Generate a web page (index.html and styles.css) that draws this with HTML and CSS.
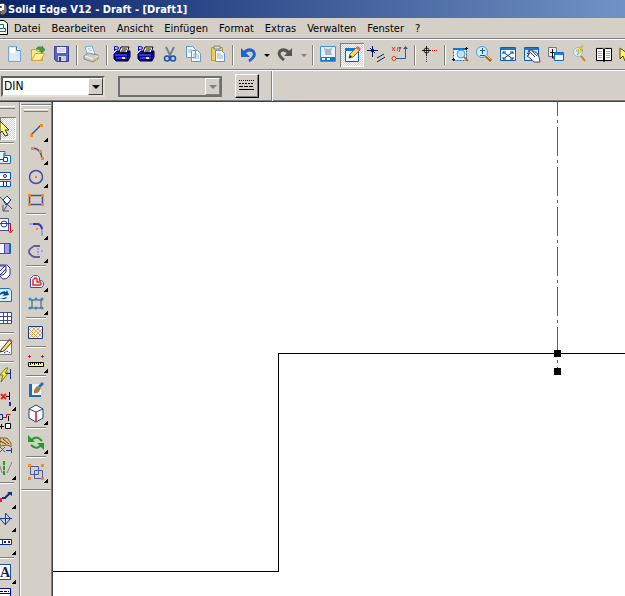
FILE: index.html
```
<!DOCTYPE html>
<html lang="de">
    <head>
        <title>Solid Edge V12 - Draft - [Draft1]</title>
        <meta charset="utf8"/>
        <link rel="stylesheet" href="styles.css">
    </head>
    <body>
        <header class="title">
            <svg class="title-icon" width="8" height="18"><path d="M0 3h4l3 3v6l-3 3H0z" fill="#777" stroke="#222"/><path d="M0 5h3v4H1v2" fill="none" stroke="#fff" stroke-width="2"/></svg>
            <h1>Solid Edge V12 - Draft - [Draft1]</h1>
        </header>
        <nav class="menu">
            <svg class="menu-icon" width="8" height="20"><path d="M-1 2.500h5l3.500 3v11H-1z" fill="#fff" stroke="#000"/><path d="M0 6.500h3.500v4h2v3H0M0 10.500h3" fill="none" stroke="#175"/></svg>
            <button>Datei</button>
            <button>Bearbeiten</button>
            <button>Ansicht</button>
            <button>Einfügen</button>
            <button>Format</button>
            <button>Extras</button>
            <button>Verwalten</button>
            <button>Fenster</button>
            <button>?</button>
        </nav>
        <div class="toolbar">
            <button class="tool" aria-label="Neu"><svg viewBox="0 0 24 24"><path d="M6.500 3.500h8l4 4v11h-12z" fill="#dcebfb" stroke="#75a5dc"/><path d="M14.500 3.500v4h4" fill="#fff" stroke="#4779bd"/><path d="M8 5h5v5H8z" fill="#fff"/></svg></button>
            <button class="tool" aria-label="Öffnen"><svg viewBox="0 0 24 24"><path d="M5.500 17.500v-11h4l2 2h5v9z" fill="#ffe58a" stroke="#d3a32c"/><path d="M5.500 17.500l4-7h9l-4 7z" fill="#fff09a" stroke="#d3a32c"/><path d="M10 6q3-4 6-1V3l3 4-4 3V8q-2-2-5-2" fill="#35a53a" stroke="#187525" stroke-width=".5"/></svg></button>
            <button class="tool" aria-label="Speichern"><svg viewBox="0 0 24 24"><path d="M4.500 3.500h14v15h-12l-2-2z" fill="#5961c5" stroke="#3d3f9c"/><path d="M7 4h9v6H7z" fill="#f2f4fb"/><path d="M8 6h7M8 8h7" stroke="#b6bddf"/><path d="M8 13h8v5H8z" fill="#c8cce4"/><path d="M9 14h2v4H9z" fill="#34367d"/></svg></button>
            <span class="sep"></span>
            <button class="tool" aria-label="Drucken"><svg viewBox="0 0 24 24"><path d="M5 4l7-1 3 8-7 2z" fill="#eff8ff" stroke="#7fa9d1"/><path d="M4 13l4-3 10 2v4l-5 3-9-3z" fill="#c7cbd2" stroke="#858b91"/><path d="M5 13l8 3 5-3" fill="none" stroke="#fff"/><path d="M8 6l3-1M9 8l3-1" stroke="#a5c5e3"/><path d="M13 17l4-2" stroke="#d8c743" stroke-width="2"/></svg></button>
            <span class="sep"></span>
            <button class="tool" aria-label="Schnelldruck"><svg viewBox="0 0 24 24"><path d="M4.500 8V3.500h2q2 0 2 1.500t-2 1.500h-2" fill="none" stroke="#00f"/><path d="M9 9l2-5h8l-2 6z" fill="#fff" stroke="#000"/><path d="M12 6h5M11 8h5" stroke="#000"/><path d="M4 11l3-3h2l-1 2h9l1-2h2v6l-2 4H6l-2-2z" fill="#0000b8" stroke="#000"/><path d="M5 12h12M6 15h11" stroke="#6666ff"/><path d="M12 14h3v2h-3z" fill="#ffec35"/></svg></button>
            <button class="tool" aria-label="Druckauswahl"><svg viewBox="0 0 24 24"><path d="M4.500 8V3.500h2q2 0 2 1.500t-2 1.500h-2" fill="none" stroke="#00f"/><path d="M9 9l2-5h8l-2 6z" fill="#fff" stroke="#000"/><path d="M12 6h5M11 8h5" stroke="#000"/><path d="M4 11l3-3h2l-1 2h9l1-2h2v6l-2 4H6l-2-2z" fill="#0000b8" stroke="#000"/><path d="M5 12h12M6 15h11" stroke="#6666ff"/><path d="M12 14h3v2h-3z" fill="#ffec35"/></svg></button>
            <button class="tool" aria-label="Ausschneiden"><svg viewBox="0 0 24 24"><path d="M8 4l5 10M16 4l-5 10" stroke="#738196" stroke-width="2"/><circle cx="9" cy="15.500" r="2.500" fill="none" stroke="#204fae" stroke-width="1.500"/><circle cx="15" cy="15.500" r="2.500" fill="none" stroke="#204fae" stroke-width="1.500"/></svg></button>
            <button class="tool" aria-label="Kopieren"><svg viewBox="0 0 24 24"><path d="M4.500 3.500h6l3 3v8h-9zM9.500 7.500h6l3 3v8h-9z" fill="#f5faff" stroke="#6598da"/><path d="M6 7h4M6 9h3M11 11h4M11 13h6M11 15h6" stroke="#8db4e6"/></svg></button>
            <button class="tool" aria-label="Einfügen"><svg viewBox="0 0 24 24"><path d="M5.500 4.500h11v13h-11z" fill="#f1cc5b" stroke="#b99639"/><path d="M8 3h6v3H8z" fill="#d9d9d1" stroke="#938b68"/><path d="M9.500 7.500h6l3 3v8h-9z" fill="#f8fbff" stroke="#6791cd"/><path d="M11 11h4M11 13h6M11 15h6" stroke="#91afd7"/></svg></button>
            <span class="sep"></span>
            <button class="tool" aria-label="Rückgängig"><svg viewBox="0 0 24 24"><path d="M8 10q4-5 9-2 4 5-4 10" fill="none" stroke="#2165cd" stroke-width="3"/><path d="M5 5v9h9z" fill="#2165cd"/></svg></button>
            <button class="drop" aria-label="Rückgängig-Liste"></button>
            <button class="tool" aria-label="Wiederholen"><svg viewBox="0 0 24 24"><path d="M16 10q-4-5-9-2-3 4 4 9" fill="none" stroke="#555" stroke-width="3"/><path d="M19 5v8h-8z" fill="#555"/></svg></button>
            <button class="drop gray" aria-label="Wiederholen-Liste"></button>
            <span class="sep"></span>
            <button class="tool" aria-label="Hintergrund"><svg viewBox="0 0 24 24"><path d="M4.500 3.500h15v15h-15z" fill="#e7f2fc" stroke="#3f92dd"/><path d="M8 5l4 1 4-1-1 4 1 3H9V9z" fill="#a6b8c4"/><path d="M5 14h14v4H5z" fill="#1877cb"/><path d="M6 15h3v2H6zM11 15h3v2h-3z" fill="#fff"/></svg></button>
            <button class="tool pressed" aria-label="Zeichnen"><svg viewBox="0 0 24 24"><path d="M5.500 5.500h13v13h-13z" fill="#e6f5ff" stroke="#0b64ba"/><path d="M5 5h13v3H5z" fill="#1578d5"/><path d="M9 15l1-4 7-7 3 3-7 7z" fill="#ffd75d" stroke="#956b24"/><path d="M17 4l3 3" stroke="#e85b8e" stroke-width="3"/><path d="M9 15l1-3 2 2z" fill="#222"/></svg></button>
            <button class="tool" aria-label="Beziehungen"><svg viewBox="0 0 24 24"><path d="M8.500 3v11M3 7.500h11M6 5l5 5M13 15l7-4M13 19l8-5" fill="none" stroke="#111b61"/><path d="M7 6h3v3H7z" fill="#111b61"/></svg></button>
            <button class="tool" aria-label="Koordinaten"><svg viewBox="0 0 24 24"><path d="M4 4l3 4M7 4L4 8M9 8l1-4M11 4l1 2 1-2M12 6l-1 3" stroke="#d9382c"/><path d="M8 15.500h9.500V5" fill="none" stroke="#2459aa"/><path d="M15 6l2.500-3L20 6z" fill="#2459aa"/><circle cx="6" cy="15.500" r="2" fill="#ffe46c" stroke="#e22b24"/></svg></button>
            <span class="sep"></span>
            <button class="tool" aria-label="Nullpunkt"><svg viewBox="0 0 24 24"><path d="M8.500 3v10M4 7.500h9" stroke="#222"/><circle cx="8.500" cy="7.500" r="2.500" fill="none" stroke="#222"/><path d="M14 7.500h6M8.500 14v5" stroke="#f00" stroke-dasharray="1 1"/></svg></button>
            <span class="sep"></span>
            <button class="tool" aria-label="Ausschnitt"><svg viewBox="0 0 24 24"><path d="M5.500 5.500h13v12h-13z" fill="#edf8ff" stroke="#126ccb" stroke-dasharray="2 1"/><path d="M5 5h13v2H5z" fill="#1474d5"/><circle cx="13" cy="11" r="4" fill="#b7e8fa" stroke="#5197c7"/><path d="M16 14l4 4" stroke="#c96820" stroke-width="2"/><path d="M4 16.500h3M5.500 15v3M17 5.500h3M18.500 4v3" stroke="#000"/></svg></button>
            <button class="tool" aria-label="Zoom"><svg viewBox="0 0 24 24"><circle cx="10" cy="9" r="5.500" fill="#c8efff" stroke="#5799c8"/><path d="M10.500 5v6M8 7.500h5M8 12.500h5" stroke="#34527b"/><path d="M14 13l5 5" stroke="#b8631d" stroke-width="3"/><path d="M14 12l4 4" stroke="#ffcf67"/></svg></button>
            <button class="tool" aria-label="Einpassen"><svg viewBox="0 0 24 24"><path d="M4.500 4.500h15v13h-15z" fill="#eef7ff" stroke="#075fbb"/><path d="M5 5h14v2H5z" fill="#1676da"/><path d="M7 9l10 7M17 9L7 16M7 11V9h3M14 9h3v2M7 14v2h3M14 16h3v-2" fill="none" stroke="#26415f"/></svg></button>
            <button class="tool" aria-label="Verschieben"><svg viewBox="0 0 24 24"><path d="M4.500 4.500h14v13h-14z" fill="#d7eaff" stroke="#075fbb"/><path d="M5 5h13v2H5z" fill="#1676da"/><path d="M8 8l3-1 6 3 2 4 1 5h-6l-4-4-3-2 2-1-2-2 3 1z" fill="#fff" stroke="#354777"/><path d="M9 8l6 6M12 8l5 5" stroke="#354777"/></svg></button>
            <button class="tool" aria-label="Vorherige Ansicht"><svg viewBox="0 0 24 24"><path d="M4.500 4.500h8v9h-8z" fill="#eee" stroke="#777"/><path d="M8.500 6v9h3M6 9.500h5" fill="none" stroke="#111"/><path d="M10.500 9.500h9v8h-9z" fill="#eff7ff" stroke="#0969c7"/><path d="M11 10h8v2h-8z" fill="#267ddd"/></svg></button>
            <button class="tool" aria-label="Schnellansicht"><svg viewBox="0 0 24 24"><circle cx="10" cy="9" r="4.500" fill="#d8f2fb" stroke="#8fb8dc"/><path d="M13 13l4 5" stroke="#d87727" stroke-width="2"/><path d="M14 3L8 8h3l-2 4 6-5h-3l3-4z" fill="#ffe93c" stroke="#8a8420" stroke-width=".5"/></svg></button>
            <button class="tool" aria-label="Handbuch"><svg viewBox="0 0 24 24"><path d="M4 4h16v15H4z" fill="#bbb"/><path d="M4.500 5.500h6l1.500 1 1.500-1h6v12h-6l-1.500 1-1.500-1h-6z" fill="#fff" stroke="#000"/><path d="M12 6v12" stroke="#000" stroke-width="2"/><path d="M6 8.500h4M6 10.500h4M6 12.500h4M6 14.500h4M14 8.500h4M14 10.500h4M14 12.500h4M14 14.500h4" stroke="#aaa"/></svg></button>
            <button class="tool" aria-label="Hilfe"><svg viewBox="0 0 24 24"><path d="M4 5v11l3-3 2 5 3-1-2-4h5z" fill="#fff65a" stroke="#555511"/></svg></button>
        </div>
        <div class="ribbon">
            <div class="combo">
                <select aria-label="Norm"><option>DIN</option></select>
                <span class="combo-arrow"></span>
            </div>
            <div class="combo disabled">
                <select aria-label="Stil" disabled><option></option></select>
                <span class="combo-arrow"></span>
            </div>
            <button class="line-btn" aria-label="Linienarten"><svg viewBox="0 0 22 22"><path d="M3 5.500h15" stroke="#000" stroke-dasharray="1 1"/><path d="M3 8.500h15" stroke="#000" stroke-dasharray="2 1"/><path d="M3 11.500h15" stroke="#000" stroke-dasharray="4 1"/><path d="M3 14.500h15" stroke="#000"/></svg></button>
            <span class="ribbon-end"></span>
        </div>
        <main class="work">
            <div class="side main-side">
                <button class="stool pressed" aria-label="Auswahl"><svg viewBox="0 0 16 23"><path d="M0 4l9 9H5l3 5-3 1-3-5-2 2z" fill="#ffff79" stroke="#333"/></svg></button>
                <span class="hsep"></span>
                <button class="stool" aria-label="Zeichnungsansicht"><svg viewBox="0 0 16 23"><path d="M-1 5.500h6v4h5.500v8H-1" fill="#e4f5ff" stroke="#0878d1"/><path d="M3.500 11.500h4v4h-4z" fill="#fff" stroke="#173f9b"/><path d="M0 13.500h3M4 7v4" stroke="#173f9b"/></svg></button>
                <button class="stool" aria-label="Hauptansicht"><svg viewBox="0 0 16 23"><path d="M-1 3.500h11.500v7H-1M-1 12.500h11.500v5H-1" fill="#fff" stroke="#0755bc"/><circle cx="5" cy="7" r="1.500" fill="none" stroke="#24208a"/><path d="M3.500 13v4M6.500 13v4" stroke="#24208a"/></svg></button>
                <button class="stool" aria-label="Hilfsansicht"><svg viewBox="0 0 16 23"><path d="M3 8l4-4 4 4-5 5z" fill="#fff" stroke="#173f9b"/><path d="M0 5l12 12" stroke="#b3262b"/><path d="M11 7l-7 11M3 13v6h6" fill="none" stroke="#444a6a"/></svg></button>
                <button class="stool" aria-label="Schnitt"><svg viewBox="0 0 16 23"><path d="M-1 3.500h9.500v12H-1" fill="#fff" stroke="#4a4bb0"/><circle cx="4" cy="9" r="3" fill="none" stroke="#173f9b"/><path d="M0 8.500h10.500v8M8 15l2.500 3 2.500-3" fill="none" stroke="#b91111"/></svg></button>
                <button class="stool" aria-label="Schnittansicht"><svg viewBox="0 0 16 23"><path d="M-1 5.500h11.500v10H-1" fill="#fff" stroke="#1164c4"/><path d="M5 6h4v9H5z" fill="#a79ddd"/><path d="M4.500 6v9M9.500 6v9" stroke="#5145bd"/></svg></button>
                <button class="stool" aria-label="Ausbruch"><svg viewBox="0 0 16 23"><path d="M0 4h7l3 3v7q-3 5-7 4l-3-3" fill="#fff" stroke="#3a318e"/><path d="M0 5h6v6l-3 3H0" fill="#eef" stroke="#27308b"/><path d="M0 10l5-5M0 14l6-6" stroke="#27308b"/></svg></button>
                <button class="stool" aria-label="Aktualisieren"><svg viewBox="0 0 16 23"><path d="M-1 4.500h10l2.500 2v11H-1" fill="#d9f0ff" stroke="#1475c8"/><path d="M0 9q4-3 6-1l1-2 2 5-6 1 1-2q-2-1-4 1M0 15h5q2-1 2-2" fill="#084d91"/></svg></button>
                <button class="stool" aria-label="Tabelle"><svg viewBox="0 0 16 23"><path d="M-1 5.500h12.500v11H-1M0 9.500h11M0 13.500h11M3.500 6v10M7.500 6v10" fill="#fff" stroke="#3d489b"/></svg></button>
                <span class="hsep"></span>
                <button class="stool" aria-label="Skizze"><svg viewBox="0 0 16 23"><path d="M-1 4.500h12.500v14H-1" fill="#fff" stroke="#777"/><path d="M1 14l8-10 3 2-8 9-4 1z" fill="#ffe067" stroke="#333"/><path d="M9 3l3 3" stroke="#db4f60" stroke-width="2"/><path d="M4 17l3-2 3 2" fill="none" stroke="#13269c" stroke-dasharray="2 1"/></svg></button>
                <span class="hsep"></span>
                <button class="stool" aria-label="Smart Dimension"><svg viewBox="0 0 16 23"><path d="M6 3L0 10h3l-2 7 7-9H5l3-5z" fill="#ffff37" stroke="#777711"/><path d="M10.500 4v10M6 8.500h4" stroke="#132a8a"/></svg></button>
                <button class="stool more" aria-label="Koordinatenbemaßung"><svg viewBox="0 0 16 23"><path d="M1 6l5 5M6 6l-5 5" stroke="#e52222" stroke-width="2"/><path d="M9.500 4v8M6 8.500h3" stroke="#111"/><path d="M9 14h2v4H9z" fill="#102aaf"/></svg></button>
                <button class="stool" aria-label="Abstand"><svg viewBox="0 0 16 23"><path d="M-1 3.500h3.500v5H-1" fill="none" stroke="#152ca0"/><path d="M3 6.500h3.500v-3h4" fill="none" stroke="#c41212"/><path d="M8.500 5v5M0 15.500h4M1.500 13v5" stroke="#111"/><path d="M5.500 12.500h5v5h-5z" fill="#fff" stroke="#000"/></svg></button>
                <button class="stool" aria-label="Bemaßung"><svg viewBox="0 0 16 23"><path d="M0 4h7l4 5v4l-3-2-8 1z" fill="#e3c48c" stroke="#805d27"/><path d="M0 7l6 3M3 5l6 5" stroke="#5c4426"/><path d="M0 13l5 5M5 13l-5 5" stroke="#e52222"/><path d="M6 16.500h5.500M11.500 14v5" fill="none" stroke="#1831a8"/></svg></button>
                <button class="stool more" aria-label="Symmetrie"><svg viewBox="0 0 16 23"><path d="M0 9l2 7" stroke="#888"/><path d="M4 4v15" stroke="#17a11f" stroke-width="2" stroke-dasharray="4 1"/><path d="M12 5L7 16" stroke="#888"/></svg></button>
                <span class="hsep"></span>
                <button class="stool more" aria-label="Verbinder"><svg viewBox="0 0 16 23"><path d="M2 12h3l5-5" fill="none" stroke="#102d82" stroke-width="2"/><path d="M0 12h2v4H0z" fill="#e01945"/><path d="M7 6h5v4z" fill="#102d82"/></svg></button>
                <button class="stool more" aria-label="Schweißsymbol"><svg viewBox="0 0 16 23"><path d="M0 9.500h12M5.500 4v12L0 9.500M5.500 4l5 5.500-5 6" fill="none" stroke="#173da7"/></svg></button>
                <button class="stool more" aria-label="Toleranzrahmen"><svg viewBox="0 0 16 23"><path d="M-1 7.500h12.500v5H-1" fill="#fff" stroke="#0d268b"/><path d="M2.500 7v6M4 9l2 2M6 9l-2 2M8 9l2 2M10 9l-2 2" stroke="#0d268b"/></svg></button>
                <span class="hsep"></span>
                <button class="stool more letter" aria-label="Text">A</button>
                <button class="stool" aria-label="Stückliste"><svg viewBox="0 0 16 23"><path d="M-1 4.500h11.500v14H-1M0 9.500h10M0 14.500h10" fill="#fff" stroke="#00a"/><path d="M0 7.500h9M0 12.500h9" stroke="#000" stroke-dasharray="3 1"/></svg></button>
            </div>
            <div class="side">
                <div class="draw-side">
                    <button class="stool more" aria-label="Linie"><svg viewBox="0 0 24 23"><path d="M7 16L17 6" stroke="#454d9d" stroke-width="1.500"/><path d="M6 15h3v3H6zM16 5h3v3h-3z" fill="#f28b22"/></svg></button>
                    <button class="stool more" aria-label="Bogen"><svg viewBox="0 0 24 23"><path d="M8 6q9 0 10 11" fill="none" stroke="#454d9d" stroke-width="1.500"/><path d="M7 5h3v3H7zM15 8h3v3h-3zM17 15h3v3h-3z" fill="#f28b22"/></svg></button>
                    <button class="stool more" aria-label="Kreis"><svg viewBox="0 0 24 23"><circle cx="12" cy="12" r="6.500" fill="none" stroke="#454d9d" stroke-width="1.500"/><path d="M11 11h2v2h-2z" fill="#f28b22"/></svg></button>
                    <button class="stool" aria-label="Rechteck"><svg viewBox="0 0 24 23"><path d="M5.500 7.500h13v9h-13z" fill="none" stroke="#454d9d" stroke-width="1.500"/><path d="M4 6h3v3H4zM17 6h3v3h-3zM4 15h3v3H4zM17 15h3v3h-3z" fill="#f28b22"/></svg></button>
                    <span class="hsep"></span>
                    <button class="stool more" aria-label="Verrundung"><svg viewBox="0 0 24 23"><path d="M5 7h7q6 0 6 6v6" fill="none" stroke="#a39df0" stroke-width="2"/><path d="M9 7h4q4 0 5 5" fill="none" stroke="#4135a8" stroke-width="2"/><path d="M12 11h2v2h-2z" fill="#f28b22"/></svg></button>
                    <button class="stool more" aria-label="Trimmen"><svg viewBox="0 0 24 23"><path d="M16 6h-6q-10 6 0 11h6" fill="none" stroke="#625da3" stroke-width="2"/><path d="M14 8v7M17 11h3" stroke="#a39df0" stroke-width="2" stroke-dasharray="2 1"/></svg></button>
                    <span class="hsep"></span>
                    <button class="stool more" aria-label="Offset"><svg viewBox="0 0 24 23"><path d="M6.500 18.500v-9l3-3h4l2 2v3h2l2 2v3l-2 2z" fill="#eee" stroke="#4250a5"/><path d="M9 16v-5l2-2h1l1 1v3h3l1 1v1l-1 1z" fill="#fff" stroke="#ef2525" stroke-width="1.500"/></svg></button>
                    <button class="stool more" aria-label="Symmetrischer Offset"><svg viewBox="0 0 24 23"><path d="M7 8h5M13 8h5M7 16h5M13 16h5M8 8v8M17 8v8" stroke="#3d506b" fill="none"/><g fill="#278cca"><circle cx="6" cy="7" r="1.500"/><circle cx="12" cy="7" r="1.500"/><circle cx="18" cy="7" r="1.500"/><circle cx="6" cy="16" r="1.500"/><circle cx="12" cy="16" r="1.500"/><circle cx="18" cy="16" r="1.500"/></g></svg></button>
                    <span class="hsep"></span>
                    <button class="stool" aria-label="Füllung"><svg viewBox="0 0 24 23"><path d="M4.500 5.500h14v12h-14z" fill="#fff3dc" stroke="#15399c"/><path d="M5 9l3-3M5 13l7-7M5 17l11-11M9 17l9-9M13 17l5-5M8 6l10 10M12 6l6 6M5 8l9 9M5 12l5 5" stroke="#eea95d"/></svg></button>
                    <span class="hsep"></span>
                    <button class="stool more" aria-label="Messen"><svg viewBox="0 0 24 23"><path d="M4 6.500h3M5.500 5v3M17 6.500h3M18.500 5v3" stroke="#b32626"/><path d="M4.500 12.500h15v4h-15z" fill="#ff5" stroke="#000"/><path d="M6.500 13v2M8.500 13v1M10.500 13v2M12.500 13v1M14.500 13v2M16.500 13v1" stroke="#000"/></svg></button>
                    <span class="hsep"></span>
                    <button class="stool" aria-label="Format übertragen"><svg viewBox="0 0 24 23"><path d="M6 5h11v13H6z" fill="#f3faff"/><path d="M5 5h3v11h9v2H5z" fill="#176cc5"/><path d="M10 11l3-4 4 2-2 4q-3 2-5 1z" fill="#b6793c"/><path d="M15 8l4-4" stroke="#1b72cf" stroke-width="3"/></svg></button>
                    <button class="stool more" aria-label="3D-Ansicht"><svg viewBox="0 0 24 23"><path d="M5 7l7-4 7 4v9l-7 4-7-4z" fill="#fff" stroke="#1b4582"/><path d="M5 7l7 3 7-3" fill="none" stroke="#1b4582"/><path d="M12 9v10" stroke="#d54a5a" stroke-width="2"/></svg></button>
                    <span class="hsep"></span>
                    <button class="stool more" aria-label="Ansichten aktualisieren"><svg viewBox="0 0 24 23"><path d="M7 10q5-7 11 0M18 13q-5 7-11 1" fill="none" stroke="#249b2d" stroke-width="2"/><path d="M4 4v7h7zM20 19v-7h-7z" fill="#249b2d"/></svg></button>
                    <span class="hsep"></span>
                    <button class="stool more" aria-label="Gruppieren"><svg viewBox="0 0 24 23"><path d="M6.500 6.500h8v8h-8zM10.500 10.500h8v8h-8z" fill="none" stroke="#4c5b99"/><path d="M4 4h3v3H4zM17 4h3v3h-3zM4 17h3v3H4zM17 17h3v3h-3z" fill="#f28b22"/></svg></button>
                </div>
            </div>
            <!-- Zeichenblatt -->
            <svg class="sheet">
                <path d="M0 469H225V251H2000" class="contour"/>
                <path d="M504 0V269" class="axis"/>
                <rect x="501" y="248" width="7" height="7"/>
                <rect x="501" y="266" width="7" height="7"/>
            </svg>
        </main>
    </body>
</html>
```
FILE: styles.css
```
*{
    box-sizing: border-box;
}
body{
    margin: 0;
    height: 100vh;
    overflow: hidden;
    display: flex;
    flex-direction: column;
    background: #d4d0c8;
    font-family: "DejaVu Sans Condensed", "DejaVu Sans", sans-serif;
    font-size: 11px;
    color: #000;
}
button{
    margin: 0;
    padding: 0;
    border: 0;
    background: none;
    font: inherit;
    color: inherit;
}
svg{
    display: block;
    flex: none;
}
.title{
    flex: none;
    display: flex;
    align-items: center;
    height: 18px;
    background: linear-gradient(to right, #0a246a, #7092c4);
    color: #fff;
}
h1{
    margin: 0;
    font-size: 11px;
    font-weight: bold;
    white-space: nowrap;
}
.menu{
    flex: none;
    display: flex;
    align-items: center;
    height: 21px;
    gap: 11px;
    border-bottom: 1px solid #808080;
}
.menu-icon{
    margin-right: -5px;
}
/* Symbolleiste */
.toolbar{
    flex: none;
    display: flex;
    align-items: center;
    height: 31px;
    padding-left: 2px;
    border-top: 1px solid #fff;
    border-bottom: 1px solid #808080;
    overflow: hidden;
}
.tool{
    flex: none;
    width: 24px;
    height: 24px;
}
.pressed{
    background: repeating-conic-gradient(#fff 0 25%, #d4d0c8 0 50%) 0 0 / 2px 2px;
    box-shadow: inset 1px 1px #808080, inset -1px -1px #fff;
}
.sep{
    flex: none;
    width: 2px;
    height: 20px;
    margin: 0 2px;
    border-left: 1px solid #808080;
    border-right: 1px solid #fff;
}
.drop{
    flex: none;
    width: 13px;
    height: 24px;
}
.drop:before,
.combo-arrow:before{
    content: "";
    display: block;
    margin: 2px auto 0;
    width: 0;
    border: 3px solid transparent;
    border-top-color: #000;
    border-bottom: 0;
}
.drop.gray:before{
    border-top-color: #808080;
}
/* Formatleiste */
.ribbon{
    flex: none;
    display: flex;
    align-items: center;
    height: 32px;
    padding-left: 1px;
    border-top: 1px solid #fff;
    border-bottom: 1px solid #404040;
    box-shadow: inset 0 -1px #808080;
}
.combo{
    position: relative;
    width: 104px;
    height: 21px;
    margin-right: 13px;
}
.combo select{
    appearance: none;
    width: 100%;
    height: 100%;
    padding: 0 18px 0 1px;
    border: 2px solid;
    border-color: #606060 #e4e0d8 #e4e0d8 #606060;
    border-radius: 0;
    background: #fff;
    font: inherit;
    font-size: 12px;
    color: #000;
}
.combo.disabled select{
    background: #d4d0c8;
    border-color: #707070;
    opacity: 1;
}
.combo-arrow{
    position: absolute;
    top: 2px;
    right: 2px;
    width: 15px;
    height: 17px;
    background: #d4d0c8;
    border: 1px solid;
    border-color: #fff #404040 #404040 #fff;
    pointer-events: none;
}
.combo-arrow:before{
    margin-top: 6px;
    border-width: 4px 4px 0;
}
.disabled .combo-arrow{
    border-color: #fff #808080 #808080 #fff;
}
.disabled .combo-arrow:before{
    border-top-color: #808080;
}
.line-btn{
    width: 24px;
    height: 24px;
    border: 1px solid;
    border-color: #fff #000 #000 #fff;
    box-shadow: inset -1px -1px #808080;
}
.ribbon-end{
    align-self: stretch;
    width: 2px;
    margin-left: 12px;
    border-left: 1px solid #808080;
    border-right: 1px solid #fff;
}
/* Arbeitsbereich */
.work{
    flex: 1;
    min-height: 0;
    display: flex;
    overflow: hidden;
}
.side{
    flex: none;
    width: 33px;
    padding-right: 1px;
    border-right: 1px solid #404040;
    border-left: 1px solid #fff;
    box-shadow: inset -1px 0 #808080;
}
.main-side{
    width: 20px;
    padding-top: 15px;
    border-left: 0;
    border-right: 1px solid #808080;
    box-shadow: none;
    background: linear-gradient(#fff, #fff) 0 4px / 15px 1px no-repeat, linear-gradient(#808080, #808080) 0 6px / 15px 1px no-repeat;
}
.draw-side{
    margin-top: 2px;
    padding: 14px 0 6px 3px;
    border-top: 1px solid #808080;
    border-bottom: 1px solid #808080;
    box-shadow: 0 1px #fff, inset 0 1px #fff;
    background: linear-gradient(#fff, #fff) 3px 4px / 24px 1px no-repeat, linear-gradient(#808080, #808080) 3px 6px / 24px 1px no-repeat;
}
.stool{
    display: block;
    width: 24px;
    height: 23px;
}
.main-side .stool{
    width: 16px;
}
.more{
    background: linear-gradient(135deg, transparent 50%, #000 50%) right bottom / 4px 4px no-repeat;
}
.hsep{
    display: block;
    width: 20px;
    height: 2px;
    margin: 2px;
    border-top: 1px solid #808080;
    border-bottom: 1px solid #fff;
}
.main-side .hsep{
    width: 14px;
    margin-left: 0;
}
.letter{
    background:
        linear-gradient(135deg, transparent 50%, #000 50%) right bottom / 4px 4px no-repeat,
        linear-gradient(#fff, #fff) 0 4px / 10px 14px no-repeat,
        linear-gradient(#1d4fa6, #1d4fa6) 0 3px / 11px 16px no-repeat;
    font: bold 14px "Liberation Serif", serif;
    color: #0b2268;
    text-align: left;
}
.sheet{
    flex: 1;
    min-width: 0;
    height: 100%;
    background: #fff;
    shape-rendering: crispEdges;
}
.contour{
    fill: none;
    stroke: #000;
}
.axis{
    stroke: #e000e0;
    stroke-dasharray: 29 4 3 4;
    stroke-dashoffset: 15;
}
```
